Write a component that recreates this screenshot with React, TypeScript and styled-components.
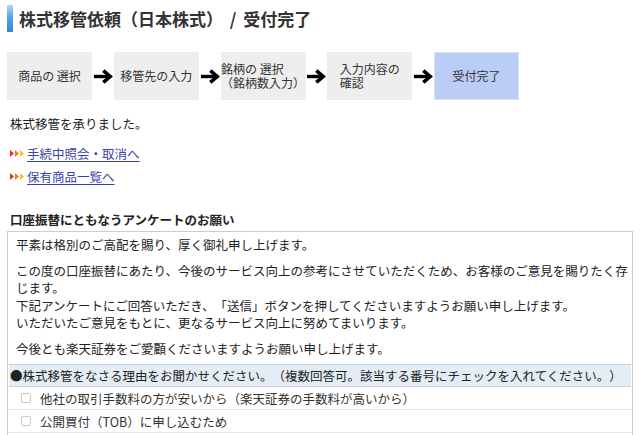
import React from "react";
import styled, { createGlobalStyle } from "styled-components";

const GlobalStyle = createGlobalStyle`
  html, body { margin: 0; padding: 0; background: #fff; }
  body {
    font-family: "Noto Sans CJK JP", "Noto Sans", sans-serif;
    color: #222;
    text-spacing-trim: space-all;
  }
`;

const Page = styled.div`
  padding: 5px 7px 0;
  font-size: 12.5px;
`;

const TitleRow = styled.div`
  display: flex;
  align-items: center;
  gap: 6px;
  height: 27px;
`;

const AccentBar = styled.span`
  width: 6px;
  height: 27px;
  flex: none;
  background: linear-gradient(#b2d6f4, #5aa5e6 45%, #2f86d6);
`;

const Title = styled.h1`
  margin: 0;
  font-size: 17px;
  font-weight: bold;
  line-height: 27px;
  color: #333;
  white-space: pre;
  word-spacing: 3px;
`;

const Steps = styled.div`
  display: flex;
  margin-top: 20px;
  height: 48px;
`;

const StepBox = styled.div<{ $active?: boolean }>`
  width: 85px;
  flex: none;
  box-sizing: border-box;
  display: flex;
  align-items: center;
  justify-content: center;
  background: ${(p) => (p.$active ? "#b9cdf5" : "#eeeeee")};
  box-shadow: ${(p) => (p.$active ? "inset 0 0 0 1px #d8e3f8" : "none")};
  font-size: 12px;
  line-height: 14px;
  color: #333;
`;

const StepText = styled.span`
  text-align: left;
  white-space: nowrap;
`;

const ArrowSlot = styled.div`
  width: 21.75px;
  flex: none;
  display: flex;
  align-items: center;
  justify-content: center;
`;

const Message = styled.p`
  margin: 15px 0 0 3px;
  line-height: 18px;
`;

const LinkList = styled.div`
  margin: 11px 0 0 3px;
  display: flex;
  flex-direction: column;
  gap: 5px;
`;

const LinkRow = styled.div`
  display: flex;
  align-items: center;
  gap: 3px;
  height: 18px;
`;

const Link = styled.a`
  color: #3b43a6;
  text-decoration: underline;
  text-underline-offset: 2px;
`;

const SectionHeading = styled.h2`
  margin: 26px 0 2px 3px;
  font-size: 12.5px;
  font-weight: bold;
  line-height: 18px;
  color: #222;
`;

const SurveyBox = styled.div`
  border: 1px solid #cccccc;
  padding: 4px 0 30px;
`;

const Para = styled.p`
  margin: 0;
  padding: 0 2px 0 8px;
  line-height: 17.5px;
  & + & {
    margin-top: 8px;
  }
`;

const Table = styled.div`
  margin: 7px 1px 0;
`;

const QuestionRow = styled.div`
  height: 23px;
  box-sizing: border-box;
  display: flex;
  align-items: center;
  padding-left: 1px;
  background: #e4edf6;
  border-top: 1px solid #c8d2dc;
  border-bottom: 1px solid #c8d2dc;
  white-space: nowrap;
`;

const OptionRow = styled.label`
  height: 23px;
  box-sizing: border-box;
  display: flex;
  align-items: center;
  gap: 9px;
  padding-left: 12px;
  border-bottom: 1px solid #e6e6e6;
  color: #333;
`;

const Check = styled.input`
  appearance: none;
  margin: 0;
  width: 10px;
  height: 10px;
  border: 1px solid #c9c9c9;
  border-radius: 2px;
  background: #fff;
  box-sizing: border-box;
`;

const StepArrow = () => (
  <svg width="20" height="15" viewBox="0 0 20 15">
    <path d="M1 7.5 H16" stroke="#000" strokeWidth="3.4" fill="none" />
    <path d="M10.3 1.6 L17.2 7.5 L10.3 13.4" stroke="#000" strokeWidth="3.6" fill="none" strokeLinejoin="miter" />
  </svg>
);

const TripleArrow = () => (
  <svg width="14" height="7" viewBox="0 0 14 7">
    <polygon points="0,0 4,3.5 0,7" fill="#e5322a" />
    <polygon points="5,0 9,3.5 5,7" fill="#f2782a" />
    <polygon points="10,0 14,3.5 10,7" fill="#f6c21c" />
  </svg>
);

const steps: { lines: string[]; active?: boolean }[] = [
  { lines: ["商品の 選択"] },
  { lines: ["移管先の入力"] },
  { lines: ["銘柄の 選択", "（銘柄数入力）"] },
  { lines: ["入力内容の", "確認"] },
  { lines: ["受付完了"], active: true },
];

export default function App() {
  return (
    <>
      <GlobalStyle />
      <Page>
        <TitleRow>
          <AccentBar />
          <Title>株式移管依頼（日本株式） / 受付完了</Title>
        </TitleRow>

        <Steps>
          {steps.map((s, i) => (
            <React.Fragment key={i}>
              {i > 0 && (
                <ArrowSlot>
                  <StepArrow />
                </ArrowSlot>
              )}
              <StepBox $active={s.active}>
                <StepText>
                  {s.lines.map((l, j) => (
                    <React.Fragment key={j}>
                      {j > 0 && <br />}
                      {l}
                    </React.Fragment>
                  ))}
                </StepText>
              </StepBox>
            </React.Fragment>
          ))}
        </Steps>

        <Message>株式移管を承りました。</Message>

        <LinkList>
          <LinkRow>
            <TripleArrow />
            <Link href="#">手続中照会・取消へ</Link>
          </LinkRow>
          <LinkRow>
            <TripleArrow />
            <Link href="#">保有商品一覧へ</Link>
          </LinkRow>
        </LinkList>

        <SectionHeading>口座振替にともなうアンケートのお願い</SectionHeading>

        <SurveyBox>
          <Para>平素は格別のご高配を賜り、厚く御礼申し上げます。</Para>
          <Para>
            この度の口座振替にあたり、今後のサービス向上の参考にさせていただくため、お客様のご意見を賜りたく存じます。
            <br />
            下記アンケートにご回答いただき、「送信」ボタンを押してくださいますようお願い申し上げます。
            <br />
            いただいたご意見をもとに、更なるサービス向上に努めてまいります。
          </Para>
          <Para>今後とも楽天証券をご愛顧くださいますようお願い申し上げます。</Para>

          <Table>
            <QuestionRow>
              ●株式移管をなさる理由をお聞かせください。（複数回答可。該当する番号にチェックを入れてください。）
            </QuestionRow>
            <OptionRow>
              <Check type="checkbox" />
              他社の取引手数料の方が安いから（楽天証券の手数料が高いから）
            </OptionRow>
            <OptionRow>
              <Check type="checkbox" />
              公開買付（TOB）に申し込むため
            </OptionRow>
          </Table>
        </SurveyBox>
      </Page>
    </>
  );
}
